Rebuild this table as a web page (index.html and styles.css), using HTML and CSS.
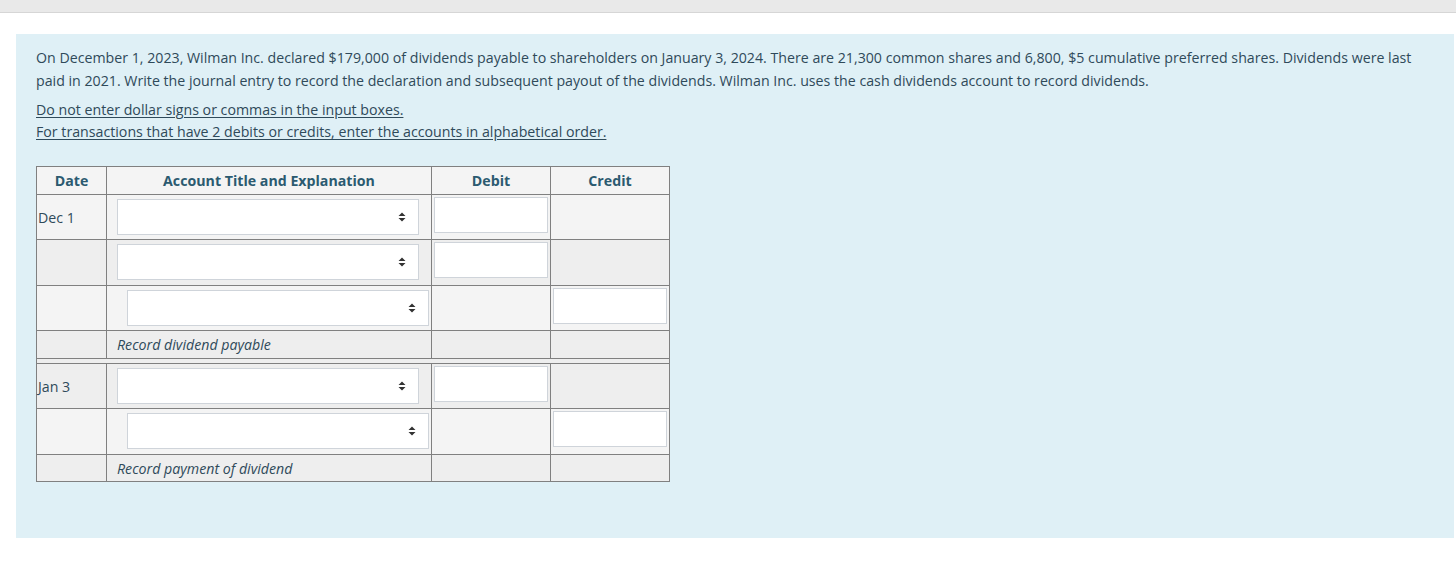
FILE: index.html
```html
<!DOCTYPE html>
<html>
<head>
<meta charset="utf-8">
<link rel="stylesheet" href="styles.css">
</head>
<body>
<div class="topbar"></div>
<div class="panel">
  <p class="question">On December 1, 2023, Wilman Inc. declared $179,000 of dividends payable to shareholders on January 3, 2024. There are 21,300 common shares and 6,800, $5 cumulative preferred shares. Dividends were last paid in 2021. Write the journal entry to record the declaration and subsequent payout of the dividends. Wilman Inc. uses the cash dividends account to record dividends.</p>
  <div class="notes">
    <div class="note">Do not enter dollar signs or commas in the input boxes.</div>
    <div class="note">For transactions that have 2 debits or credits, enter the accounts in alphabetical order.</div>
  </div>
  <table class="journal">
    <thead>
      <tr class="head">
        <th class="c-date">Date</th>
        <th class="c-acct">Account Title and Explanation</th>
        <th class="c-num">Debit</th>
        <th class="c-num">Credit</th>
      </tr>
    </thead>
    <tbody>
      <tr class="row light">
        <td class="date">Dec 1</td>
        <td class="acct"><div class="select"><span class="arrows"><svg width="8" height="10" viewBox="0 0 8 10"><path d="M0.5 4 L4 0.5 L7.5 4 Z M0.5 6 L4 9.5 L7.5 6 Z" fill="#333"/></svg></span></div></td>
        <td class="num"><div class="input"></div></td>
        <td class="num"></td>
      </tr>
      <tr class="row dark tall">
        <td class="date"></td>
        <td class="acct"><div class="select"><span class="arrows"><svg width="8" height="10" viewBox="0 0 8 10"><path d="M0.5 4 L4 0.5 L7.5 4 Z M0.5 6 L4 9.5 L7.5 6 Z" fill="#333"/></svg></span></div></td>
        <td class="num"><div class="input"></div></td>
        <td class="num"></td>
      </tr>
      <tr class="row light">
        <td class="date"></td>
        <td class="acct indent"><div class="select"><span class="arrows"><svg width="8" height="10" viewBox="0 0 8 10"><path d="M0.5 4 L4 0.5 L7.5 4 Z M0.5 6 L4 9.5 L7.5 6 Z" fill="#333"/></svg></span></div></td>
        <td class="num"></td>
        <td class="num"><div class="input"></div></td>
      </tr>
      <tr class="expl dark">
        <td></td>
        <td class="explain">Record dividend payable</td>
        <td></td>
        <td></td>
      </tr>
      <tr class="sep">
        <td colspan="4"></td>
      </tr>
      <tr class="row dark">
        <td class="date">Jan 3</td>
        <td class="acct"><div class="select"><span class="arrows"><svg width="8" height="10" viewBox="0 0 8 10"><path d="M0.5 4 L4 0.5 L7.5 4 Z M0.5 6 L4 9.5 L7.5 6 Z" fill="#333"/></svg></span></div></td>
        <td class="num"><div class="input"></div></td>
        <td class="num"></td>
      </tr>
      <tr class="row light tall">
        <td class="date"></td>
        <td class="acct indent"><div class="select"><span class="arrows"><svg width="8" height="10" viewBox="0 0 8 10"><path d="M0.5 4 L4 0.5 L7.5 4 Z M0.5 6 L4 9.5 L7.5 6 Z" fill="#333"/></svg></span></div></td>
        <td class="num"></td>
        <td class="num"><div class="input"></div></td>
      </tr>
      <tr class="expl dark last">
        <td></td>
        <td class="explain">Record payment of dividend</td>
        <td></td>
        <td></td>
      </tr>
    </tbody>
  </table>
</div>
</body>
</html>
```
FILE: styles.css
```css
* { box-sizing: border-box; }
html, body { margin: 0; padding: 0; background: #fff; }
body {
  font-family: "Open Sans", "Noto Sans", sans-serif;
  font-size: 14.2px;
  color: #2f4a5a;
}
.topbar {
  height: 13px;
  background: #e9e9e9;
  border-bottom: 1px solid #d6d6d6;
}
.panel {
  margin: 21px 0 0 16px;
  width: 1438px;
  height: 504px;
  background: #dff0f6;
  padding: 12px 20px 0 20px;
}
.question {
  margin: 0;
  line-height: 23px;
}
.notes {
  margin-top: 7px;
}
.note {
  line-height: 22px;
  text-decoration: underline;
  text-underline-offset: 2px;
}
.journal {
  margin-top: 23px;
  border-collapse: collapse;
  width: 634px;
  table-layout: fixed;
}
.journal th, .journal td {
  border: 1px solid #808080;
  padding: 0;
}
.c-date { width: 70px; }
.c-acct { width: 325px; }
.c-num { width: 119px; }
.head th {
  height: 28px;
  background: #f4f4f4;
  color: #2b5a70;
  font-weight: 700;
  text-align: center;
  vertical-align: middle;
}
.light td { background: #f4f4f4; }
.dark td { background: #eeeeee; }
.row td { height: 45px; vertical-align: top; }
.row.tall td { height: 46px; }
.date {
  padding: 13px 0 0 1px !important;
  color: #2f4a5a;
}
.acct { padding: 4px 12px 0 10px !important; }
.acct.indent { padding: 4px 2px 0 20px !important; }
.select {
  height: 36px;
  background: #fff;
  border: 1px solid #cfd4da;
  position: relative;
}
.arrows {
  position: absolute;
  right: 12px;
  top: 12px;
  width: 8px;
  height: 10px;
  display: block;
}
.arrows svg { display: block; }
.num { padding: 2px 2px 0 2px !important; }
.input {
  height: 36px;
  background: #fff;
  border: 1px solid #cfd4da;
}
.expl td { height: 28px; vertical-align: middle; }
.expl.last td { height: 27px; }
.explain {
  padding-left: 10px !important;
  font-style: italic;
  color: #2f4a5a;
}
.sep td {
  height: 5px;
  background: #eeeeee;
}
```
